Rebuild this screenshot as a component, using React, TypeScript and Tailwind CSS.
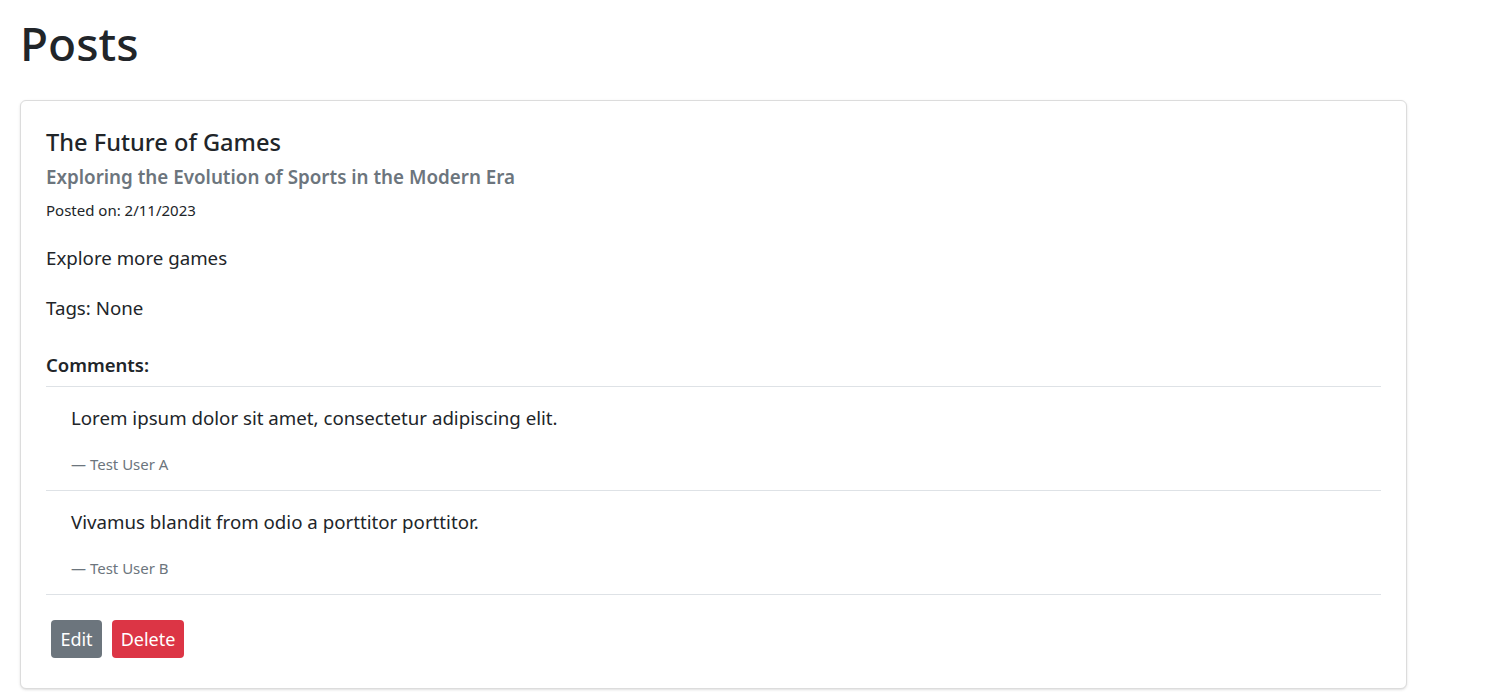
import React from 'react';

const comments = [
  { id: 1, text: 'Lorem ipsum dolor sit amet, consectetur adipiscing elit.', author: 'Test User A' },
  { id: 2, text: 'Vivamus blandit from odio a porttitor porttitor.', author: 'Test User B' },
];

export default function App() {
  return (
    <div className="min-h-screen bg-white px-5 text-[#212529]" style={{ fontFamily: '"Noto Sans", "Open Sans", sans-serif' }}>
      <h1 className="pt-[14px] mb-[28px] text-[46px] leading-[58px] font-medium">Posts</h1>

      <div className="w-[1387px] rounded-[6px] border border-[#dcdcdc] bg-white p-[25px] pb-[30px] shadow-sm">
        <h4 className="mb-[6px] text-[23.6px] leading-[33px] font-medium">The Future of Games</h4>
        <h6 className="mb-[11px] text-[18.8px] leading-[24px] font-semibold text-[#6c757d]">
          Exploring the Evolution of Sports in the Modern Era
        </h6>
        <p className="mb-[24px] text-[15px] leading-[20px]">Posted on: 2/11/2023</p>
        <p className="mb-[23px] text-[18.7px] leading-[27px]">Explore more games</p>
        <p className="mb-[33px] text-[18.7px] leading-[27px]">Tags: None</p>

        <h6 className="mb-[10px] text-[18.5px] leading-[22px] font-semibold">Comments:</h6>
        <ul className="border-t border-[#dee2e6]">
          {comments.map((c) => (
            <li key={c.id} className="border-b border-[#dee2e6] px-[25px] pt-[17px] pb-[15px]">
              <p className="mb-[22px] text-[18.7px] leading-[27px]">{c.text}</p>
              <p className="text-[15px] leading-[22px] text-[#6c757d]">— {c.author}</p>
            </li>
          ))}
        </ul>

        <div className="mt-[25px] flex gap-[10px] pl-[5px]">
          <button className="h-[38px] w-[51px] rounded-[4px] bg-[#6c757d] text-[18px] text-white">Edit</button>
          <button className="h-[38px] w-[72px] rounded-[4px] bg-[#dc3545] text-[18px] text-white">Delete</button>
        </div>
      </div>
    </div>
  );
}
